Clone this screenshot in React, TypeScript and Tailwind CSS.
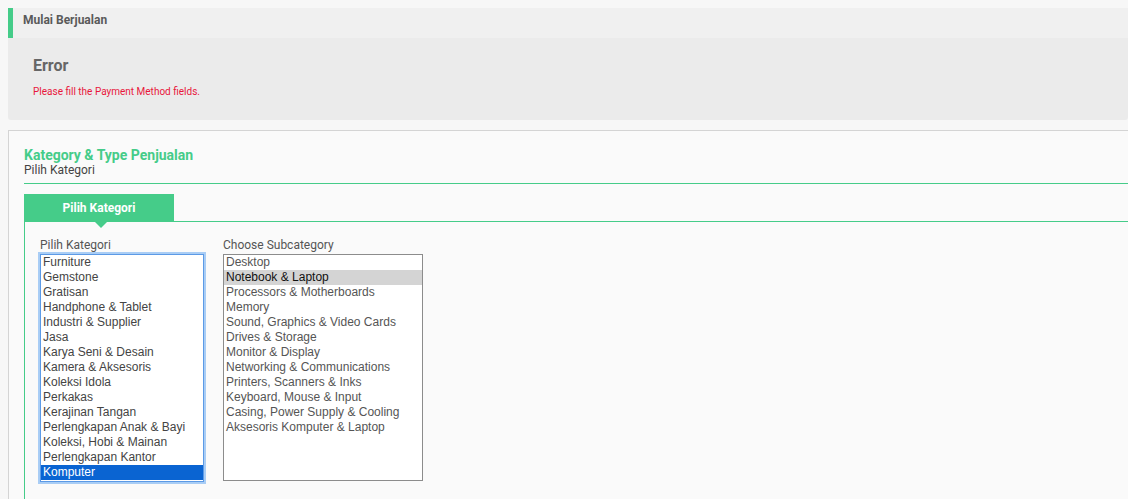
const categories = [
  'Furniture',
  'Gemstone',
  'Gratisan',
  'Handphone & Tablet',
  'Industri & Supplier',
  'Jasa',
  'Karya Seni & Desain',
  'Kamera & Aksesoris',
  'Koleksi Idola',
  'Perkakas',
  'Kerajinan Tangan',
  'Perlengkapan Anak & Bayi',
  'Koleksi, Hobi & Mainan',
  'Perlengkapan Kantor',
  'Komputer',
]

const subcategories = [
  'Desktop',
  'Notebook & Laptop',
  'Processors & Motherboards',
  'Memory',
  'Sound, Graphics & Video Cards',
  'Drives & Storage',
  'Monitor & Display',
  'Networking & Communications',
  'Printers, Scanners & Inks',
  'Keyboard, Mouse & Input',
  'Casing, Power Supply & Cooling',
  'Aksesoris Komputer & Laptop',
]

const listFont = { fontFamily: '"Liberation Sans", Arial, sans-serif' }

export default function App() {
  return (
    <div
      className="h-[499px] w-full overflow-hidden bg-[#f7f7f7] pl-2 pt-2"
      style={{ fontFamily: 'Roboto, "Liberation Sans", sans-serif' }}
    >
      {/* header */}
      <div className="h-[30px] border-l-[5px] border-[#45cc89] bg-[#f0f0f0] pt-[5px] pl-[10px]">
        <div className="text-[12px] leading-[14px] font-bold text-[#5a5a5a]">Mulai Berjualan</div>
      </div>

      {/* error */}
      <div className="h-[82px] rounded-b-[3px] bg-[#ebebeb] px-[25px] pt-[18px]">
        <div className="text-[16px] leading-[20px] font-bold text-[#666]">Error</div>
        <div className="mt-[10px] text-[10px] leading-[12px] text-[#e8173c]">Please fill the Payment Method fields.</div>
      </div>

      {/* panel */}
      <div className="mt-[10px] h-[400px] border-t border-l border-[#d4d4d4] bg-[#fafafa] pt-[16px] pl-[15px]">
        <div className="border-b border-[#45cc89] pb-[6px]">
          <div className="text-[14px] leading-[16px] font-bold text-[#45cc89]">Kategory &amp; Type Penjualan</div>
          <div className="text-[12px] leading-[14px] text-[#444]">Pilih Kategori</div>
        </div>

        <div className="mt-[10px] flex">
          <div className="relative flex h-[28px] w-[150px] items-center justify-center bg-[#45cc89]">
            <span className="text-[12px] font-bold text-white">Pilih Kategori</span>
            <div className="absolute top-full left-[71px] h-0 w-0 border-x-[6px] border-t-[6px] border-x-transparent border-t-[#45cc89]" />
          </div>
          <div className="flex-1 border-b border-[#45cc89]" />
        </div>

        <div className="flex h-[300px] gap-[19px] border-l border-[#45cc89] pt-[16px] pl-[15px]">
          <div>
            <div className="mb-[2px] text-[12px] leading-[14px] text-[#555]">Pilih Kategori</div>
            <div
              className="h-[228px] w-[164px] border border-[#5c9ae6] bg-white shadow-[0_0_0_2px_#a9cdf5]"
              style={listFont}
            >
              {categories.map((c) => (
                <div
                  key={c}
                  className={
                    c === 'Komputer'
                      ? 'h-[15px] bg-[#0a64d2] pl-[2px] text-[12px] leading-[15px] text-white'
                      : 'h-[15px] pl-[2px] text-[12px] leading-[15px] text-[#444]'
                  }
                >
                  {c}
                </div>
              ))}
            </div>
          </div>
          <div>
            <div className="mb-[2px] text-[12px] leading-[14px] text-[#555]">Choose Subcategory</div>
            <div className="h-[227px] w-[200px] border border-[#8c8c8c] bg-white" style={listFont}>
              {subcategories.map((c) => (
                <div
                  key={c}
                  className={
                    c === 'Notebook & Laptop'
                      ? 'h-[15px] bg-[#d4d4d4] pl-[2px] text-[12px] leading-[15px] text-[#111]'
                      : 'h-[15px] pl-[2px] text-[12px] leading-[15px] text-[#555]'
                  }
                >
                  {c}
                </div>
              ))}
            </div>
          </div>
        </div>
      </div>
    </div>
  )
}
